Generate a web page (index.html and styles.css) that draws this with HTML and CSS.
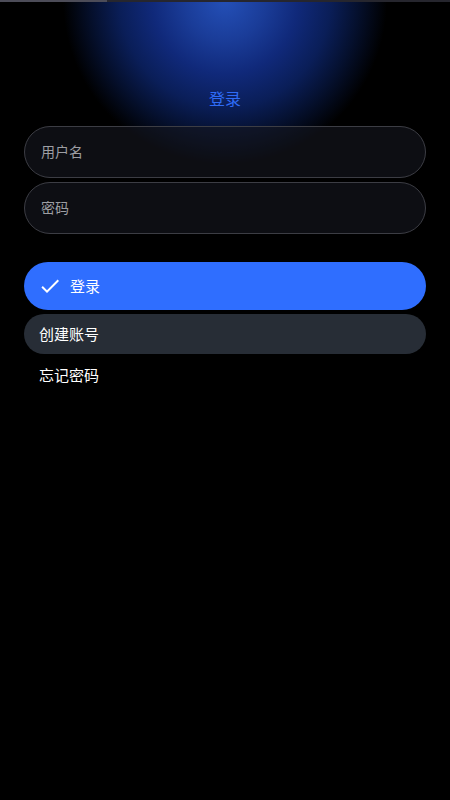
FILE: index.html
```html
<!DOCTYPE html>
<html lang="zh-CN">
  <head>
    <meta charset="UTF-8" />
    <meta name="viewport" content="width=device-width, initial-scale=1.0" />
    <title>登录</title>
    <link rel="stylesheet" href="styles.css">
  </head>
  <body>
    <div class="progress"><div class="progress-bar"></div></div>
    <div class="container">
      <h1 class="title">登录</h1>
      <form class="form" onsubmit="event.preventDefault()">
        <input class="field" type="text" placeholder="用户名" />
        <input class="field" type="password" placeholder="密码" />
        <button type="submit" class="btn btn-primary">
          <svg class="check" viewBox="0 0 24 24" width="24" height="24">
            <path d="M9 16.17L4.83 12l-1.42 1.41L9 19 21 7l-1.41-1.41z" fill="#fff" />
          </svg>
          <span>登录</span>
        </button>
        <button type="button" class="btn btn-secondary"><span>创建账号</span></button>
        <button type="button" class="btn btn-text"><span>忘记密码</span></button>
      </form>
    </div>
  </body>
</html>
```

FILE: styles.css
```css
body {
  margin: 0;
  min-height: 800px;
  font-family: "Noto Sans CJK SC", "Noto Sans", sans-serif;
  color: #fff;
  background: radial-gradient(ellipse 162px 165px at 225px 0, #2450b8 0%, #1a3c98 25%, #10297a 45%, #0a1e58 65%, #05102e 82%, rgba(0, 0, 0, 0) 100%) no-repeat, #000;
}

.progress {
  height: 2px;
  background-color: #26262e;
}

.progress-bar {
  width: 107px;
  height: 100%;
  background-color: #4c4c58;
}

.container {
  padding: 0 24px;
}

.title {
  margin: 0 0 17px;
  padding-top: 85px;
  font-size: 16px;
  line-height: 22px;
  font-weight: 400;
  text-align: center;
  color: #2f6cf6;
}

.form {
  display: flex;
  flex-direction: column;
}

.field {
  height: 52px;
  margin-bottom: 4px;
  padding: 0 16px 2px;
  border: 1px solid #3c3d44;
  border-radius: 26px;
  background-color: rgba(22, 24, 32, 0.6);
  color: #fff;
  font-family: inherit;
  font-size: 14px;
  box-sizing: border-box;
  outline: none;
}

.field::placeholder {
  color: #9d9ea3;
}

.field + .field {
  margin-bottom: 28px;
}

.btn {
  display: flex;
  align-items: center;
  border: none;
  border-radius: 24px;
  font-family: inherit;
  font-size: 15px;
  color: #fff;
  text-align: left;
  cursor: pointer;
}

.btn span {
  margin-top: -2px;
}

.btn-primary {
  height: 48px;
  padding: 0 14px;
  gap: 8px;
  background-color: #2f6eff;
}

.btn-secondary {
  height: 40px;
  margin-top: 4px;
  padding: 0 15px;
  background-color: #272d36;
}

.btn-text {
  height: 44px;
  padding: 0 15px;
  background: none;
}

.btn-text span {
  margin-top: -4px;
}
```
